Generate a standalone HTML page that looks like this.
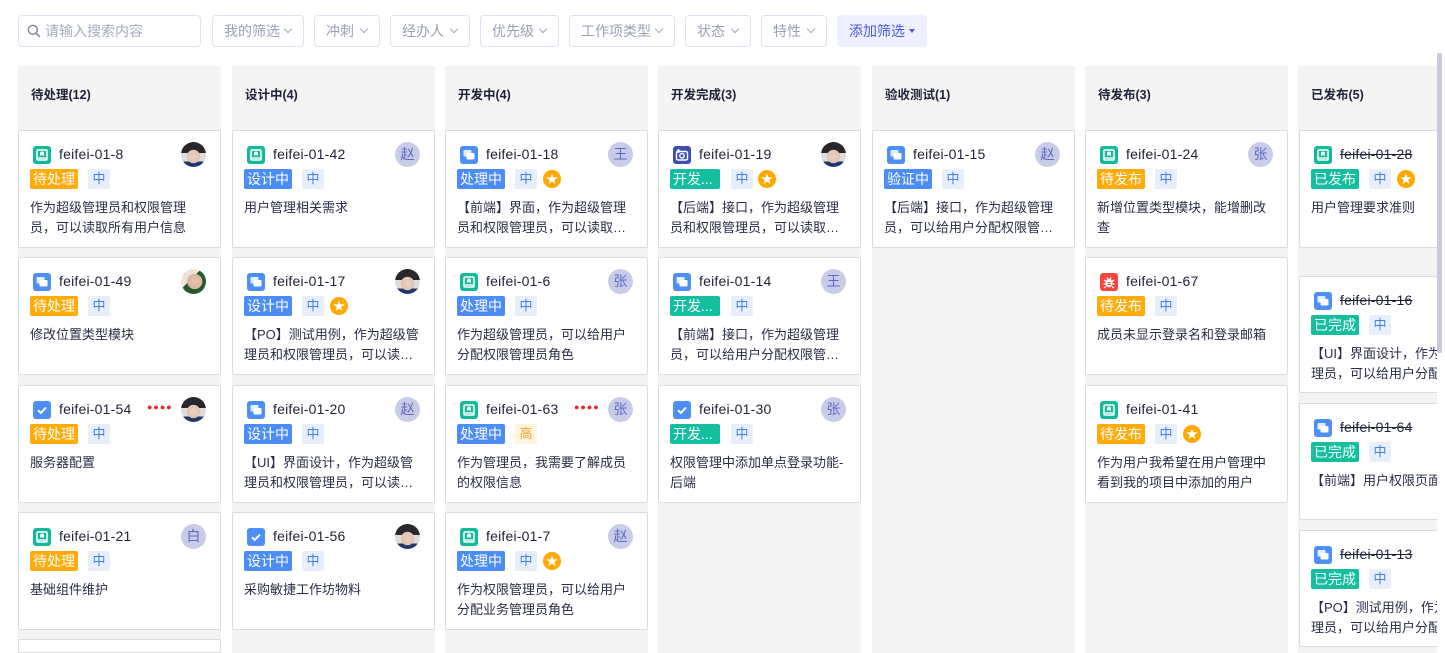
<!DOCTYPE html>
<html style="width:1445px;height:653px;overflow:hidden"><head><meta charset="utf-8">
<style>
*{box-sizing:border-box;margin:0;padding:0}
body{width:1445px;height:653px;overflow:hidden;background:#fff;font-family:"Liberation Sans","Noto Sans CJK SC",sans-serif;position:relative;color:#1f2237}
.f{position:absolute;top:15px;height:32px;border:1px solid #dde4ef;border-radius:4px;font-size:14px;color:#9aa1b1;line-height:30px;padding-left:11px}
.f .ar{position:absolute;right:12px;top:10px;width:6px;height:6px;border-right:1.3px solid #a4aabb;border-bottom:1.3px solid #a4aabb;transform:rotate(45deg)}
.col{position:absolute;top:66px;width:203px;height:587px;background:#f4f4f4}
.col h3{position:absolute;left:13px;top:18px;font-size:12.5px;font-weight:bold;color:#1f2237}
.c{position:absolute;width:203px;height:118px;background:#fff;border:1px solid #dcdcdc;border-radius:2px}
.c svg{position:absolute;left:14px;top:15px}
.id{position:absolute;left:40px;top:15px;font-size:14px;color:#1f2237;letter-spacing:.2px}
.del{text-decoration:line-through}
.av{position:absolute;left:162px;top:11px;width:25px;height:25px;border-radius:50%;background:#c8cce8;color:#5e6bbf;font-size:14px;text-align:center;line-height:25px}
.ph{background:radial-gradient(circle at 50% 58%,#ead2c3 0,#e2c2b0 34%,transparent 36%),linear-gradient(#29272b 45%,#ddd 45%,#ddd 78%,#21396a 78%)}
.ph2{background:radial-gradient(circle at 55% 50%,#e6c6b0 0,#d9b49c 40%,transparent 42%),linear-gradient(135deg,#f0e2d6 40%,#245a2c 41%)}
.st{position:absolute;left:11px;top:38px;height:20px;padding:0 3px;font-size:14px;line-height:20px;color:#fff;border-radius:2px}
.o{background:#ffac0b}.b{background:#4b8cf5}.g{background:#13bf9f}
.pr{position:absolute;left:69px;top:38px;width:22px;height:20px;background:#e7effc;color:#3f7fe8;font-size:13px;line-height:20px;text-align:center;border-radius:2px}
.hi{background:#fff4e0;color:#f5a623}
.star{position:absolute;left:97px;top:39px;width:18px;height:18px;border-radius:50%;background:#ffa900;color:#fff;font-size:12px;line-height:18px;text-align:center}
.d{position:absolute;left:11px;top:67px;width:176px;font-size:13px;line-height:20px;color:#2a2d45;display:-webkit-box;-webkit-line-clamp:2;-webkit-box-orient:vertical;overflow:hidden}
.dots{position:absolute;left:128px;top:16px;color:#f0252c;font-size:9px;letter-spacing:1px}
</style></head><body>
<div class="f" style="left:18px;width:183px;padding-left:26px;color:#a6acba">请输入搜索内容
<svg style="position:absolute;left:8px;top:8px" width="14" height="14" viewBox="0 0 14 14"><circle cx="5.8" cy="5.8" r="4.5" fill="none" stroke="#7f8595" stroke-width="1.4"/><path d="M9.2 9.2l3.6 3.6" stroke="#7f8595" stroke-width="1.5"/></svg></div>
<div class="f" style="left:212px;width:92px">我的筛选<span class="ar"></span></div>
<div class="f" style="left:314px;width:66px">冲刺<span class="ar"></span></div>
<div class="f" style="left:390px;width:80px">经办人<span class="ar"></span></div>
<div class="f" style="left:480px;width:79px">优先级<span class="ar"></span></div>
<div class="f" style="left:569px;width:106px">工作项类型<span class="ar"></span></div>
<div class="f" style="left:685px;width:66px">状态<span class="ar"></span></div>
<div class="f" style="left:761px;width:66px">特性<span class="ar"></span></div>
<div class="f" style="left:837px;width:90px;background:#eef0ff;border-color:#eef0ff;color:#4a58d4">添加筛选<span style="position:absolute;left:71px;top:13px;border:3.5px solid transparent;border-top:4px solid #4a58d4"></span></div>

<div class="col" style="left:18px"><h3>待处理(12)</h3></div>
<div class="col" style="left:232px"><h3>设计中(4)</h3></div>
<div class="col" style="left:445px"><h3>开发中(4)</h3></div>
<div class="col" style="left:658px"><h3>开发完成(3)</h3></div>
<div class="col" style="left:872px"><h3>验收测试(1)</h3></div>
<div class="col" style="left:1085px"><h3>待发布(3)</h3></div>
<div class="col" style="left:1298px"><h3>已发布(5)</h3></div>

<svg width="0" height="0" style="position:absolute">
<defs>
<g id="s"><rect width="18" height="18" rx="3" fill="#14b99b"/><rect x="4" y="4" width="10" height="10" rx="1" fill="none" stroke="#fff" stroke-width="1.5"/><path d="M7 6.5l2-1.2 2 1.2v3.5l-2-1-2 1z" fill="#fff"/><path d="M4 12h10" stroke="#fff" stroke-width="1.4"/></g>
<g id="t"><rect width="18" height="18" rx="3" fill="#4d8ef7"/><rect x="3.5" y="4" width="8" height="6.5" rx="1" fill="#fff" opacity=".85"/><rect x="6.5" y="7" width="8" height="6.5" rx="1" fill="#fff"/></g>
<g id="k"><rect width="18" height="18" rx="3" fill="#4d8ef7"/><path d="M5 9.2l2.8 2.8 5.2-5.5" fill="none" stroke="#fff" stroke-width="2"/></g>
<g id="u"><rect width="18" height="18" rx="3" fill="#f5473b"/><ellipse cx="9" cy="10" rx="3.5" ry="4.2" fill="#fff"/><path d="M4 7l2 1.5M14 7l-2 1.5M3.5 11h2M14.5 11h-2M4 15l2-1.5M14 15l-2-1.5M7 4.5l1 1.5M11 4.5l-1 1.5" stroke="#fff" stroke-width="1.2"/><path d="M7.5 9.5h3M7.5 11.5h3" stroke="#f5473b" stroke-width="1"/></g>
<g id="m"><rect width="18" height="18" rx="3" fill="#3d4eb8"/><rect x="3.5" y="5.5" width="11" height="8.5" rx="1.5" fill="none" stroke="#fff" stroke-width="1.4"/><circle cx="9" cy="9.8" r="2.2" fill="none" stroke="#fff" stroke-width="1.4"/><path d="M5.5 3v4M3.5 5h4" stroke="#fff" stroke-width="1.4"/></g>
</defs></svg>

<!-- col1 -->
<div class="c" style="left:18px;top:130px"><svg width="18" height="18"><use href="#s"/></svg><div class="id">feifei-01-8</div><div class="av ph"></div><div class="st o">待处理</div><div class="pr">中</div><div class="d">作为超级管理员和权限管理员，可以读取所有用户信息</div></div>
<div class="c" style="left:18px;top:257px"><svg width="18" height="18"><use href="#t"/></svg><div class="id">feifei-01-49</div><div class="av ph2"></div><div class="st o">待处理</div><div class="pr">中</div><div class="d">修改位置类型模块</div></div>
<div class="c" style="left:18px;top:385px"><svg width="18" height="18"><use href="#k"/></svg><div class="id">feifei-01-54</div><div class="dots">●●●●</div><div class="av ph"></div><div class="st o">待处理</div><div class="pr">中</div><div class="d">服务器配置</div></div>
<div class="c" style="left:18px;top:512px"><svg width="18" height="18"><use href="#s"/></svg><div class="id">feifei-01-21</div><div class="av">白</div><div class="st o">待处理</div><div class="pr">中</div><div class="d">基础组件维护</div></div>
<div class="c" style="left:18px;top:639px;height:14px"></div>
<!-- col2 -->
<div class="c" style="left:232px;top:130px"><svg width="18" height="18"><use href="#s"/></svg><div class="id">feifei-01-42</div><div class="av">赵</div><div class="st b">设计中</div><div class="pr">中</div><div class="d">用户管理相关需求</div></div>
<div class="c" style="left:232px;top:257px"><svg width="18" height="18"><use href="#t"/></svg><div class="id">feifei-01-17</div><div class="av ph"></div><div class="st b">设计中</div><div class="pr">中</div><div class="star">★</div><div class="d">【PO】测试用例，作为超级管理员和权限管理员，可以读取所有用户信息</div></div>
<div class="c" style="left:232px;top:385px"><svg width="18" height="18"><use href="#t"/></svg><div class="id">feifei-01-20</div><div class="av">赵</div><div class="st b">设计中</div><div class="pr">中</div><div class="d">【UI】界面设计，作为超级管理员和权限管理员，可以读取所有用户信息</div></div>
<div class="c" style="left:232px;top:512px"><svg width="18" height="18"><use href="#k"/></svg><div class="id">feifei-01-56</div><div class="av ph"></div><div class="st b">设计中</div><div class="pr">中</div><div class="d">采购敏捷工作坊物料</div></div>
<!-- col3 -->
<div class="c" style="left:445px;top:130px"><svg width="18" height="18"><use href="#t"/></svg><div class="id">feifei-01-18</div><div class="av">王</div><div class="st b">处理中</div><div class="pr">中</div><div class="star">★</div><div class="d">【前端】界面，作为超级管理员和权限管理员，可以读取所有用户信息</div></div>
<div class="c" style="left:445px;top:257px"><svg width="18" height="18"><use href="#s"/></svg><div class="id">feifei-01-6</div><div class="av">张</div><div class="st b">处理中</div><div class="pr">中</div><div class="d">作为超级管理员，可以给用户分配权限管理员角色</div></div>
<div class="c" style="left:445px;top:385px"><svg width="18" height="18"><use href="#s"/></svg><div class="id">feifei-01-63</div><div class="dots">●●●●</div><div class="av">张</div><div class="st b">处理中</div><div class="pr hi">高</div><div class="d">作为管理员，我需要了解成员的权限信息</div></div>
<div class="c" style="left:445px;top:512px"><svg width="18" height="18"><use href="#s"/></svg><div class="id">feifei-01-7</div><div class="av">赵</div><div class="st b">处理中</div><div class="pr">中</div><div class="star">★</div><div class="d">作为权限管理员，可以给用户分配业务管理员角色</div></div>
<!-- col4 -->
<div class="c" style="left:658px;top:130px"><svg width="18" height="18"><use href="#m"/></svg><div class="id">feifei-01-19</div><div class="av ph"></div><div class="st g" style="width:50px">开发...</div><div class="pr" style="left:72px">中</div><div class="star" style="left:99px">★</div><div class="d">【后端】接口，作为超级管理员和权限管理员，可以读取所有用户信息</div></div>
<div class="c" style="left:658px;top:257px"><svg width="18" height="18"><use href="#t"/></svg><div class="id">feifei-01-14</div><div class="av">王</div><div class="st g" style="width:50px">开发...</div><div class="pr" style="left:72px">中</div><div class="d">【前端】接口，作为超级管理员，可以给用户分配权限管理员角色</div></div>
<div class="c" style="left:658px;top:385px"><svg width="18" height="18"><use href="#k"/></svg><div class="id">feifei-01-30</div><div class="av">张</div><div class="st g" style="width:50px">开发...</div><div class="pr" style="left:72px">中</div><div class="d">权限管理中添加单点登录功能-后端</div></div>
<!-- col5 -->
<div class="c" style="left:872px;top:130px"><svg width="18" height="18"><use href="#t"/></svg><div class="id">feifei-01-15</div><div class="av">赵</div><div class="st b">验证中</div><div class="pr">中</div><div class="d">【后端】接口，作为超级管理员，可以给用户分配权限管理员角色</div></div>
<!-- col6 -->
<div class="c" style="left:1085px;top:130px"><svg width="18" height="18"><use href="#s"/></svg><div class="id">feifei-01-24</div><div class="av">张</div><div class="st o">待发布</div><div class="pr">中</div><div class="d">新增位置类型模块，能增删改查</div></div>
<div class="c" style="left:1085px;top:257px"><svg width="18" height="18"><use href="#u"/></svg><div class="id">feifei-01-67</div><div class="st o">待发布</div><div class="pr">中</div><div class="d">成员未显示登录名和登录邮箱</div></div>
<div class="c" style="left:1085px;top:385px"><svg width="18" height="18"><use href="#s"/></svg><div class="id">feifei-01-41</div><div class="st o">待发布</div><div class="pr">中</div><div class="star">★</div><div class="d">作为用户我希望在用户管理中看到我的项目中添加的用户</div></div>
<!-- col7 -->
<div class="c" style="left:1299px;top:130px"><svg width="18" height="18"><use href="#s"/></svg><div class="id del">feifei-01-28</div><div class="st g">已发布</div><div class="pr">中</div><div class="star">★</div><div class="d">用户管理要求准则</div></div>
<div class="c" style="left:1299px;top:276px;height:117px"><svg width="18" height="18"><use href="#t"/></svg><div class="id del">feifei-01-16</div><div class="st g">已完成</div><div class="pr">中</div><div class="d" style="width:180px">【UI】界面设计，作为超级管理员，可以给用户分配权限管理员角色</div></div>
<div class="c" style="left:1299px;top:403px;height:117px"><svg width="18" height="18"><use href="#t"/></svg><div class="id del">feifei-01-64</div><div class="st g">已完成</div><div class="pr">中</div><div class="d" style="width:180px">【前端】用户权限页面开发</div></div>
<div class="c" style="left:1299px;top:530px;height:117px"><svg width="18" height="18"><use href="#t"/></svg><div class="id del">feifei-01-13</div><div class="st g">已完成</div><div class="pr">中</div><div class="d" style="width:180px">【PO】测试用例，作为超级管理员，可以给用户分配权限管理员角色</div></div>

<div style="position:absolute;left:1437px;top:0;width:8px;height:653px;background:#fff"></div>
<div style="position:absolute;left:1437px;top:53px;width:5px;height:300px;background:#c9cadc;border-radius:2px"></div>
</body></html>
